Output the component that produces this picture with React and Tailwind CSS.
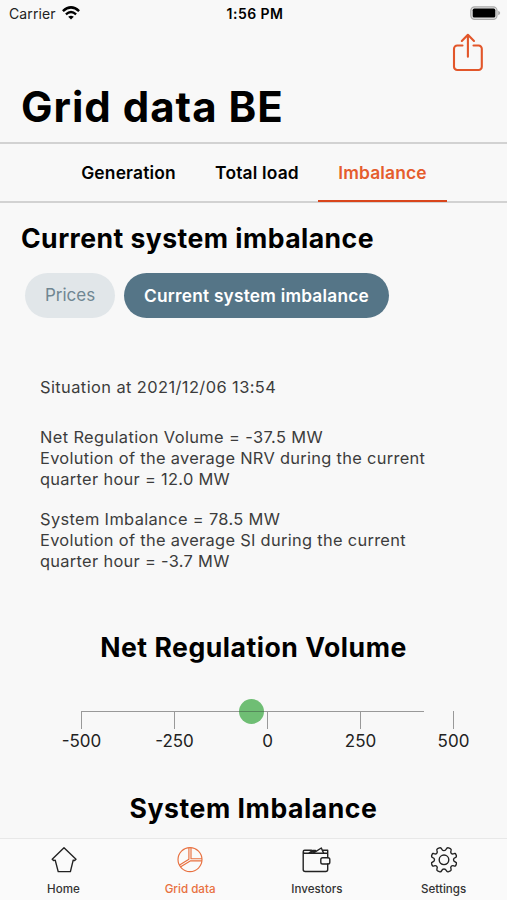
const tabs = [
  { label: 'Generation', box: 'w-[135px]' },
  { label: 'Total load', box: 'w-[122px]' },
  { label: 'Imbalance', box: 'w-[129px]', active: true },
];

const ticks = [-500, -250, 0, 250, 500];

function WifiIcon() {
  return (
    <svg className="ml-[6px] h-[14px] w-[18px]" viewBox="0 0 18 14" fill="none" stroke="#000">
      <path d="M0.9 5.1Q9-2.3 17.1 5.1" strokeWidth="2.5" />
      <path d="M3.9 8.3Q9 3.7 14.1 8.3" strokeWidth="2.3" />
      <path d="M9 13.6 6.2 10.8Q9 8.5 11.8 10.8Z" fill="#000" stroke="none" />
    </svg>
  );
}

function BatteryIcon() {
  return (
    <svg className="h-[14px] w-[31px]" viewBox="0 0 31 14">
      <rect x="0.8" y="0.8" width="26.2" height="12.6" rx="3.8" fill="#e4e4e4" stroke="#aaa" strokeWidth="1.2" />
      <rect x="2.7" y="2.6" width="22.6" height="9" rx="1.6" fill="#000" />
      <path d="M28.2 4.8Q30.2 5.5 30.2 7T28.2 9.2Z" fill="#aaa" />
    </svg>
  );
}

function ShareIcon() {
  return (
    <svg className="h-[40px] w-[32px]" viewBox="0 0 32 40" fill="none" stroke="#e2562a" strokeWidth="2.1" strokeLinecap="round" strokeLinejoin="round">
      <path d="M10.5 13.5H5.2a3.2 3.2 0 0 0-3.2 3.2v18.1A3.2 3.2 0 0 0 5.2 38h21.4a3.2 3.2 0 0 0 3.2-3.2V16.7a3.2 3.2 0 0 0-3.2-3.2H21.5" />
      <path d="M15.9 24.8V3M9.8 9 15.9 2.8 22 9" />
    </svg>
  );
}

function HomeIcon() {
  return (
    <svg className="ml-[1px] size-[28px]" viewBox="0 0 28 28" fill="none" stroke="#222" strokeWidth="1.4" strokeLinejoin="round">
      <path d="M14 1.8 26 13.2 24.6 14.6 23.2 14.1 20.4 25.6H8.2L5.2 14.1 3.6 14.6 2.2 13.2Z" />
    </svg>
  );
}

function GridIcon() {
  return (
    <svg className="size-[28px]" viewBox="0 0 28 28" fill="none" stroke="#e8703f" strokeWidth="1.15" strokeLinejoin="round">
      <circle cx="14" cy="13.6" r="12" />
      <path d="M12.9 1.7V13.2L3.2 19.2M15 1.7V12.7H26M26 14.8H14.6L4.3 20.9" />
    </svg>
  );
}

function WalletIcon() {
  return (
    <svg className="h-[28px] w-[29px]" viewBox="0 0 28 28" fill="none" stroke="#222" strokeWidth="1.4" strokeLinejoin="round" strokeLinecap="round">
      <path d="M25.2 11.6V7.2H2.2a1.5 1.5 0 0 1 0-3H9M20.5 4.2H25.2V7.2M.7 5.7V23.5a2 2 0 0 0 2 2H23.2a2 2 0 0 0 2-2V18" />
      <path d="M6.8 6.9 10 4.5H13L8.6 6.9M11.2 6.9 18.8 2 21 6.9" />
      <rect x="18.3" y="11.7" width="9" height="6.3" rx="1.8" />
    </svg>
  );
}

function SettingsIcon() {
  return (
    <svg className="size-[28px]" viewBox="0 0 28 28" fill="none" stroke="#222" strokeWidth="1.4" strokeLinejoin="round">
      <circle cx="14" cy="13.8" r="4.8" />
      <path d="M14 4.6Q15.6 4.6 16.3 3 17 1.3 18.6 1.9L20.4 2.7Q21.6 3.3 21 4.8 20.3 6.4 21.3 7.4T23.9 7.7Q25.2 7 25.8 8.2L26.4 9.8Q26.8 11.1 25.3 11.6 23.5 12.2 23.5 13.8T25.3 16Q26.8 16.5 26.4 17.8L25.8 19.4Q25.2 20.6 23.9 19.9 22.3 19.2 21.3 20.2T21 22.8Q21.6 24.3 20.4 24.9L18.6 25.7Q17 26.3 16.3 24.6 15.6 23 14 23T11.7 24.6Q11 26.3 9.4 25.7L7.6 24.9Q6.4 24.3 7 22.8 7.7 21.2 6.7 20.2T4.1 19.9Q2.8 20.6 2.2 19.4L1.6 17.8Q1.2 16.5 2.7 16 4.5 15.4 4.5 13.8T2.7 11.6Q1.2 11.1 1.6 9.8L2.2 8.2Q2.8 7 4.1 7.7 5.7 8.4 6.7 7.4T7 4.8Q6.4 3.3 7.6 2.7L9.4 1.9Q11 1.3 11.7 3T14 4.6Z" />
    </svg>
  );
}

const navItems = [
  { label: 'Home', Icon: HomeIcon },
  { label: 'Grid data', Icon: GridIcon, active: true },
  { label: 'Investors', Icon: WalletIcon },
  { label: 'Settings', Icon: SettingsIcon },
];

export default function App() {
  return (
    <div className="flex h-[900px] w-[507px] flex-col overflow-hidden bg-[#f8f8f8] font-['Inter',sans-serif] whitespace-nowrap text-black">
      <div className="grid h-[26px] shrink-0 grid-cols-3 items-center pr-[6px] pl-[9px]">
        <div className="flex items-center text-[14px] tracking-[0.1px] text-[#222]">
          <span>Carrier</span>
          <WifiIcon />
        </div>
        <span className="text-center text-[14px] font-semibold tracking-[0.45px]">1:56 PM</span>
        <div className="flex justify-end">
          <BatteryIcon />
        </div>
      </div>

      <header className="flex h-[118px] shrink-0 flex-col border-b-2 border-[#d2d2d2] pl-[21px]">
        <div className="flex h-[52px] justify-end pt-[6px] pr-[23px]">
          <ShareIcon />
        </div>
        <h1 className="text-[42px] leading-[58px] font-bold tracking-[1px]">Grid data BE</h1>
      </header>

      <nav className="flex h-[59px] shrink-0 justify-center border-b-2 border-[#d2d2d2] text-[17.4px] font-semibold tracking-[0.18px]">
        {tabs.map((t) => (
          <div
            key={t.label}
            className={`${t.box} flex h-[58px] shrink-0 items-center justify-center border-b-2 pt-[2px] pl-[1px] ${t.active ? 'border-[#d9451c] text-[#e55c2d]' : 'border-transparent'}`}
          >
            {t.label}
          </div>
        ))}
      </nav>

      <main className="flex min-h-0 flex-1 flex-col overflow-hidden">
        <h2 className="mt-[17px] pl-[21px] text-[26.6px] leading-[36px] font-bold tracking-[0.45px]">Current system imbalance</h2>
        <div className="mt-[17px] flex gap-[9px] pl-[25px]">
          <div className="flex h-[45px] w-[90px] items-center justify-center rounded-full bg-[#e1e6e9] pt-[1px] text-[17px] text-[#708692]">Prices</div>
          <div className="flex h-[45px] w-[265px] items-center justify-center rounded-full bg-[#557587] pt-[1px] text-[17.3px] font-semibold tracking-[0.22px] text-white">
            Current system imbalance
          </div>
        </div>

        <div className="mt-[59px] pl-[40px] text-[16.4px] leading-[20.8px] tracking-[0.31px] text-[#3c3c3c]">
          <p className="tracking-[0.42px]">Situation at 2021/12/06 13:54</p>
          <p className="mt-[29.5px]">
            <span className="tracking-[0.38px]">Net Regulation Volume = -37.5 MW</span>
            <br />
            Evolution of the average NRV during the current
            <br />
            quarter hour = 12.0 MW
          </p>
          <p className="mt-[19.5px]">
            <span className="tracking-[0.36px]">System Imbalance = 78.5 MW</span>
            <br />
            Evolution of the average SI during the current
            <br />
            quarter hour = -3.7 MW
          </p>
        </div>

        <h2 className="mt-[57px] text-center text-[26.6px] leading-[36px] font-bold tracking-[0.52px]">Net Regulation Volume</h2>
        <div className="relative mt-[46px] ml-[35px] w-[465px] shrink-0">
          <div className="absolute top-0 left-[46px] h-px w-[343px] bg-[#999]" />
          <div className="absolute top-[-12px] left-[204px] size-[25px] rounded-full bg-[#6fbe74]" />
          <div className="absolute top-0 left-[204px] h-px w-[25px] bg-[#55895a]" />
          <div className="flex">
            {ticks.map((n) => (
              <div key={n} className="flex w-[93px] flex-col items-center text-[17px] leading-[24px] text-[#222]">
                <div className="h-[18px] w-px bg-[#999]" />
                <span>{n}</span>
              </div>
            ))}
          </div>
        </div>
        <h2 className="mt-[37px] text-center text-[26.6px] leading-[36px] font-bold tracking-[0.55px]">System Imbalance</h2>
      </main>

      <footer className="flex h-[62px] shrink-0 border-t border-[#e8e8e8] bg-[#fafafa]">
        {navItems.map(({ label, Icon, active }) => (
          <div key={label} className={`flex flex-1 flex-col items-center pt-[7px] text-[11.6px] font-medium ${active ? 'text-[#e8703f]' : 'text-[#333]'}`}>
            <Icon />
            <span className="mt-[7px] leading-[16px]">{label}</span>
          </div>
        ))}
      </footer>
    </div>
  );
}
